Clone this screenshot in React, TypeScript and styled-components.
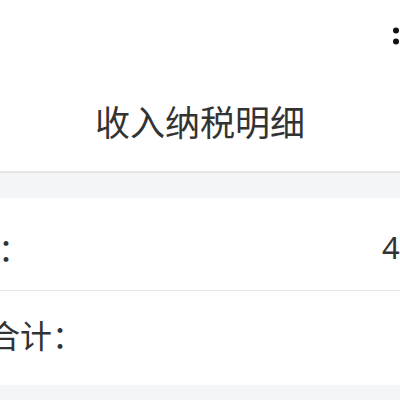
import React from "react";
import styled, { createGlobalStyle } from "styled-components";

const GlobalStyle = createGlobalStyle`
  html, body {
    margin: 0;
    padding: 0;
    background: #ffffff;
  }
  body {
    font-family: "Noto Sans CJK SC", "Noto Sans", sans-serif;
    color: #333333;
  }
`;

const Page = styled.div`
  width: 400px;
  height: 400px;
  overflow: hidden;
  display: flex;
  flex-direction: column;
  background: #f4f5f7;
`;

const Header = styled.header`
  height: 171px;
  flex-shrink: 0;
  display: flex;
  flex-direction: column;
  background: #ffffff;
  border-bottom: 2px solid #e6e7e9;
`;

const TopBar = styled.div`
  height: 72px;
  display: flex;
  justify-content: flex-end;
  align-items: flex-start;
  padding-top: 27px;
  box-sizing: border-box;
`;

const Title = styled.h1`
  margin: 0;
  height: 100px;
  line-height: 98px;
  text-align: center;
  font-size: 35px;
  font-weight: 400;
  color: #333333;
`;

const Band = styled.div<{ $h: number }>`
  height: ${(p) => p.$h}px;
  flex-shrink: 0;
  background: #f4f5f7;
`;

const List = styled.section`
  background: #ffffff;
  display: flex;
  flex-direction: column;
`;

const Row = styled.div<{ $last?: boolean; $nudge: number }>`
  height: ${(p) => (p.$last ? 94 : 93)}px;
  box-sizing: border-box;
  display: flex;
  align-items: center;
  overflow: hidden;
  padding-top: ${(p) => (p.$nudge > 0 ? p.$nudge * 2 : 0)}px;
  padding-bottom: ${(p) => (p.$nudge < 0 ? -p.$nudge * 2 : 0)}px;
  border-bottom: ${(p) => (p.$last ? "none" : "1px solid #e8e8e8")};
`;

const Label = styled.span<{ $shift: number }>`
  flex-shrink: 0;
  margin-left: ${(p) => p.$shift}px;
  font-size: 32px;
  white-space: nowrap;
  color: #333333;
`;

const Value = styled.span`
  flex: 0 0 auto;
  width: 140px;
  margin-left: auto;
  margin-right: -122px;
  font-family: "Noto Sans", "Noto Sans CJK SC", sans-serif;
  font-size: 31px;
  white-space: nowrap;
  color: #333333;
`;

const MoreDots = () => (
  <svg width="10" height="20" viewBox="0 0 10 20" style={{ marginRight: -3 }}>
    <circle cx="3" cy="3.5" r="3" fill="#111" />
    <circle cx="3" cy="14.5" r="3" fill="#111" />
  </svg>
);

export default function App() {
  return (
    <>
      <GlobalStyle />
      <Page>
        <Header>
          <TopBar>
            <MoreDots />
          </TopBar>
          <Title>收入纳税明细</Title>
        </Header>
        <Band $h={25} />
        <List>
          <Row $nudge={3}>
            <Label $shift={-98}>收入额：</Label>
            <Value>4,800.00</Value>
          </Row>
          <Row $last $nudge={-4}>
            <Label $shift={-12}>合计：</Label>
          </Row>
        </List>
        <Band $h={14} />
      </Page>
    </>
  );
}
